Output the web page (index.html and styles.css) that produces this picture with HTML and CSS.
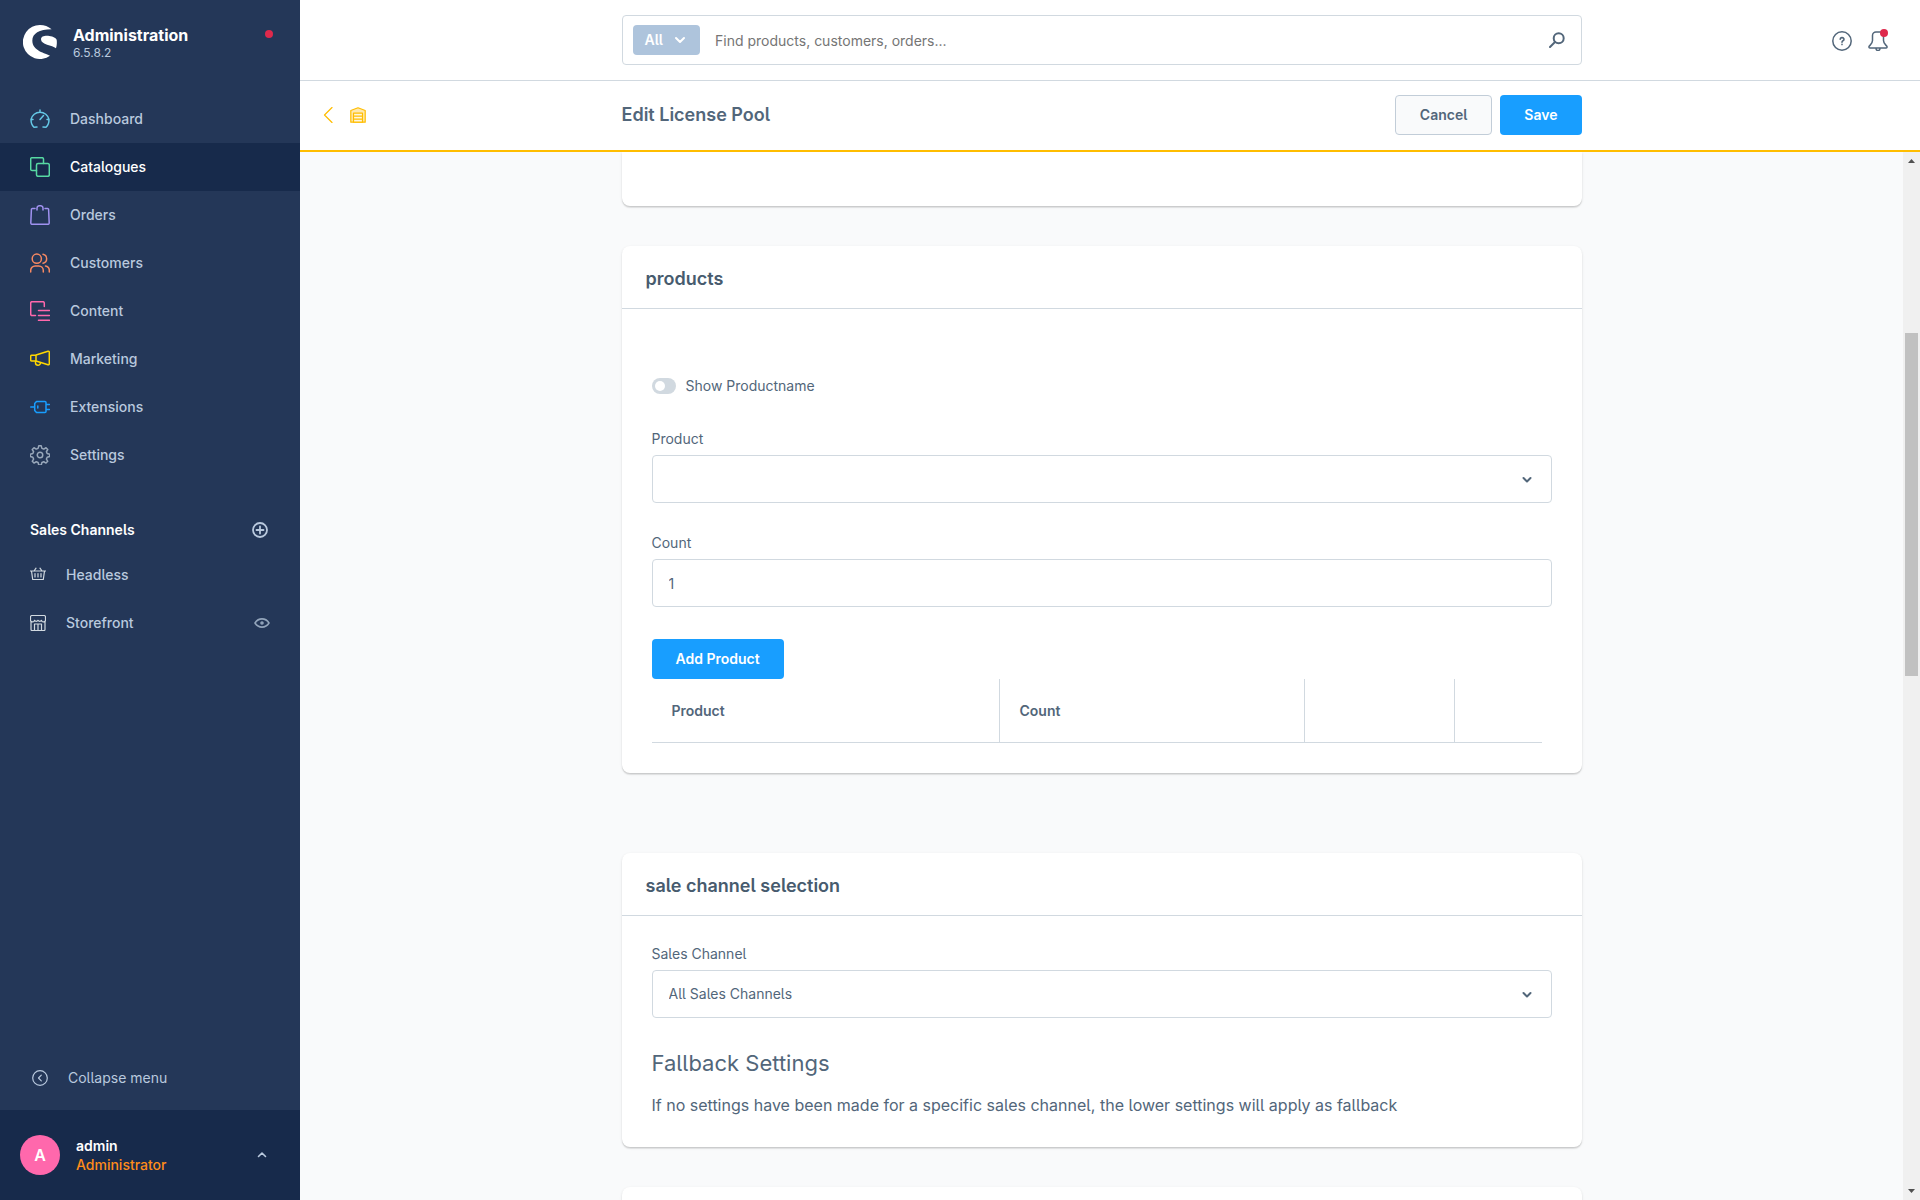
FILE: index.html
```html
<!DOCTYPE html>
<html lang="en">
<head>
<meta charset="utf-8">
<meta name="viewport" content="width=device-width, initial-scale=1">
<title>Edit License Pool | Administration</title>
<link rel="stylesheet" href="styles.css">
</head>
<body>
<div class="app">
  <aside class="sidebar">
    <header class="brand">
      <svg class="brand-logo" viewBox="0 0 102 102" aria-hidden="true"><path d="M86 13C76 4 64 0 51 0A51 51 0 1 0 81 92C68 84 28 78 28 47C28 26 48 13 86 13Z"/><path d="M54 43C54 34 66 31 79 33C91 35 99 39 101 44C102 52 102 60 99 70C88 60 54 60 54 43Z"/></svg>
      <div class="brand-text">
        <span class="brand-name">Administration</span>
        <span class="brand-version">6.5.8.2</span>
      </div>
      <span class="status-dot"></span>
    </header>
    <nav class="nav" aria-label="Main">
      <a class="nav-item" href="#"><svg class="icon-20 c-dashboard" viewBox="0 0 20 20"><path d="M7 18l-3 .2C2 16.500 1 13.500 1 10.500a9.200 9.200 0 0 1 18 0c0 3-1 6-3 7.700L13 18M1 10.500h2M17 10.500h2M10 1v2M10 10.500l3.500-4"/></svg>Dashboard</a>
      <a class="nav-item active" href="#" aria-current="page"><svg class="icon-20 c-catalogue" viewBox="0 0 20 20"><path d="M6.500 13.500H2a1.300 1.300 0 0 1-1.300-1.300V2A1.300 1.300 0 0 1 2 .7h10.200A1.300 1.300 0 0 1 13.500 2v4.500"/><rect x="6.500" y="6.500" width="12.800" height="12.800" rx="1.500"/></svg>Catalogues</a>
      <a class="nav-item" href="#"><svg class="icon-20 c-orders" viewBox="0 0 20 20"><path d="M5 3.500H2.500A1 1 0 0 0 1.400 4.500L.8 18a1.300 1.300 0 0 0 1.300 1.300h15.800a1.300 1.300 0 0 0 1.300-1.300L18.600 4.500a1 1 0 0 0-1.100-1H15M7 5V3.500A2.500 2.500 0 0 1 9 .8h2a2.500 2.500 0 0 1 2 2.700V5"/></svg>Orders</a>
      <a class="nav-item" href="#"><svg class="icon-20 c-customers" viewBox="0 0 20 20"><circle cx="6.800" cy="5.700" r="4.600"/><path d="M.7 19v-1.500A4.500 4.500 0 0 1 5.200 13h3.600a4.500 4.500 0 0 1 4.500 4.500V19M13 1.200a4.600 4.600 0 0 1 0 9M15.500 13c2.500.5 3.800 2.300 3.800 4.500V19"/></svg>Customers</a>
      <a class="nav-item" href="#"><svg class="icon-20 c-content" viewBox="0 0 20 20"><path d="M5.500 14.500H2A1.300 1.300 0 0 1 .7 13.200V2A1.300 1.300 0 0 1 2 .7h11A1.300 1.300 0 0 1 14.300 2v3.500M8.500 9.500h11M8.500 14.500h11M8.500 19.300h11"/></svg>Content</a>
      <a class="nav-item" href="#"><svg class="icon-20 c-marketing" viewBox="0 0 20 20"><path d="M6 6L18 2.200a1 1 0 0 1 1.300 1v11.600a1 1 0 0 1-1.300 1L6 12zM6 6.300H1.700a1 1 0 0 0-1 1V11a1 1 0 0 0 1 1H6M5.500 12v1.800a2.400 2.400 0 0 0 5 0"/></svg>Marketing</a>
      <a class="nav-item" href="#"><svg class="icon-20 c-extensions" viewBox="0 0 20 20"><path d="M.7 10h4M16 7.500h3.500M16 12.500h3.500M7.800 9v2M6.500 4.500H15a1 1 0 0 1 1 1v9a1 1 0 0 1-1 1H6.500l-1.800-2v-7z"/></svg>Extensions</a>
      <a class="nav-item" href="#"><svg class="icon-20 c-settings" viewBox="0 0 24 24"><circle cx="12" cy="12" r="3.300"/><path d="M10.500 1h3l.8 3 2.200.9 2.700-1.600 2.100 2.100-1.600 2.700.9 2.200 3 .8v2.800l-3 .8-.9 2.200 1.600 2.700-2.100 2.100-2.700-1.600-2.200.9-.8 3h-3l-.8-3-2.200-.9-2.700 1.600-2.100-2.100 1.600-2.700-.9-2.200-3-.8v-2.800l3-.8.9-2.200-1.600-2.700 2.100-2.100 2.700 1.600 2.200-.9z"/></svg>Settings</a>
    </nav>
    <div class="channels-head">
      <h2 class="channels-title">Sales Channels</h2>
      <button class="icon-button" type="button" aria-label="Add sales channel"><svg class="icon-16 bold" viewBox="0 0 16 16"><circle cx="8" cy="8" r="7"/><path d="M8 4.500v7M4.500 8h7"/></svg></button>
    </div>
    <nav aria-label="Sales channels">
      <a class="nav-item channel" href="#"><svg class="icon-16" viewBox="0 0 16 16"><path d="M.5 4h15M1.500 4l1.200 8.500h10.600L14.500 4M4 4l2-2.800M12 4l-2-2.800M5 6.500v3.500M8 6.500v3.500M11 6.500v3.500"/></svg>Headless</a>
      <a class="nav-item channel" href="#"><svg class="icon-16" viewBox="0 0 16 16"><path d="M1 6v8.500a1 1 0 0 0 1 1h12a1 1 0 0 0 1-1V6M.5 4.500V2A1.500 1.500 0 0 1 2 .5h12A1.500 1.500 0 0 1 15.500 2v2.500a2 2 0 0 1-4 .8 2 2 0 0 1-3.500 0 2 2 0 0 1-3.500 0 2 2 0 0 1-4-.8zM4.500 15.500V9h7v6.500M8 9v6.500"/></svg>Storefront<svg class="icon-16 eye" viewBox="0 0 16 16"><path d="M1 8c3.500-5.500 10.500-5.500 14 0-3.500 5.500-10.500 5.500-14 0z"/><circle cx="8" cy="8" r="1"/></svg></a>
    </nav>
    <button class="collapse" type="button"><svg class="icon-16" viewBox="0 0 16 16"><circle cx="8" cy="8" r="7.300"/><path d="M9.300 5.200L6.500 8l2.800 2.800"/></svg>Collapse menu</button>
    <button class="user" type="button">
      <span class="avatar">A</span>
      <span class="user-text"><span class="user-name">admin</span><span class="user-role">Administrator</span></span>
      <svg class="user-caret" viewBox="0 0 10 10"><path d="M1.500 6.500L5 3l3.500 3.500"/></svg>
    </button>
  </aside>

  <div class="workspace">
    <header class="topbar">
      <form class="search" role="search">
        <button class="search-scope" type="button">All<svg viewBox="0 0 10 8"><path d="M1 2l4 4 4-4"/></svg></button>
        <input class="search-input" type="search" aria-label="Search" placeholder="Find products, customers, orders...">
        <button class="icon-button search-go" type="submit" aria-label="Search"><svg class="icon-16" viewBox="0 0 16 16"><circle cx="9.700" cy="6.200" r="5"/><path d="M6 10L1 15"/></svg></button>
      </form>
      <div class="topbar-tools">
        <button class="icon-button" type="button" aria-label="Help"><svg class="icon-20" viewBox="0 0 20 20"><circle cx="10" cy="10" r="9.200"/><path class="question" d="M8.200 8.300a1.900 1.700 0 1 1 2.800 1.500c-.7.400-1 .8-1 1.500M10 13.200v.4"/></svg></button>
        <button class="icon-button bell" type="button" aria-label="Notifications"><svg class="icon-20" viewBox="0 0 20 20"><path d="M8 .9h4a3.500 3.500 0 0 1 3.500 3.500v5.100c0 2.500 1 3.200 3 5.300.8.900.8 2.200-.3 2.200H1.800c-1.100 0-1.100-1.300-.3-2.200 2-2.100 3-2.800 3-5.300V4.400A3.500 3.500 0 0 1 8 .9zM8 17.500a2 2 0 0 0 4 0"/></svg><span class="badge"></span></button>
      </div>
    </header>

    <div class="smartbar">
      <a class="smartbar-back" href="#" aria-label="Back to catalogues">
        <svg class="back-arrow" viewBox="0 0 10 16"><path d="M9 .5L1.500 8 9 15.500"/></svg>
        <svg class="icon-16" viewBox="0 0 16 16"><path class="shade" d="M.8 3.500L8 .8l7.200 2.700v11.700H.8z"/><path class="cutout" d="M3.500 6.200h9v9h-9z"/><path d="M3.500 9.200h9M3.500 12.200h9"/></svg>
      </a>
      <div class="smartbar-main">
        <h1 class="page-title">Edit License Pool</h1>
        <div class="actions">
          <button class="btn" type="button">Cancel</button>
          <button class="btn primary" type="submit" form="pool-form">Save</button>
        </div>
      </div>
    </div>

    <div class="viewport">
      <main class="content">
        <form class="cards" id="pool-form">
          <section class="card continued"></section>

          <section class="card products">
            <h2 class="card-title">products</h2>
            <div class="card-body">
              <label class="toggle"><input class="switch" type="checkbox" role="switch">Show Productname</label>
              <div class="field">
                <label for="product">Product</label>
                <div class="select"><select id="product"><option></option></select><svg viewBox="0 0 10 8"><path d="M1.500 2L5 5.500 8.500 2"/></svg></div>
              </div>
              <div class="field">
                <label for="count">Count</label>
                <input class="text-input" id="count" type="text" inputmode="numeric" value="1">
              </div>
              <button class="btn primary" type="button">Add Product</button>
              <table class="grid">
                <thead><tr><th class="col-product" scope="col">Product</th><th class="col-count" scope="col">Count</th><th class="col-extra"></th><th></th></tr></thead>
              </table>
            </div>
          </section>

          <section class="card">
            <h2 class="card-title">sale channel selection</h2>
            <div class="card-body">
              <div class="field">
                <label for="channel">Sales Channel</label>
                <div class="select"><select id="channel"><option>All Sales Channels</option></select><svg viewBox="0 0 10 8"><path d="M1.500 2L5 5.500 8.500 2"/></svg></div>
              </div>
              <h3 class="section-title">Fallback Settings</h3>
              <p class="hint">If no settings have been made for a specific sales channel, the lower settings will apply as fallback</p>
            </div>
          </section>

          <section class="card upcoming"></section>
        </form>
      </main>
      <div class="scrollbar" aria-hidden="true">
        <svg viewBox="0 0 7 4"><path d="M0 4L3.500 0 7 4z"/></svg>
        <div class="track"><div class="thumb"></div></div>
        <svg viewBox="0 0 7 4"><path d="M0 0L3.500 4 7 0z"/></svg>
      </div>
    </div>
  </div>
</div>
</body>
</html>
```

FILE: styles.css
```css
:root {
  --text: #52667a;
  --line: #d1d9e0;
  --primary: #189eff;
  --accent: #ffbd00;
  --scrollbar: 17px;
}

*, *::before, *::after { box-sizing: border-box; }

body {
  margin: 0;
  font: 400 14px/16px Inter, "Liberation Sans", sans-serif;
  font-feature-settings: "cv05" 1;
  color: var(--text);
  background: #f9fafb;
}

h1, h2, h3, p { margin: 0; }
button, input, select { font: inherit; font-feature-settings: inherit; color: inherit; }
button { border: 0; padding: 0; background: none; cursor: pointer; }
a { color: inherit; text-decoration: none; }
svg { flex: none; display: block; fill: none; stroke: currentColor; stroke-width: 1.5; stroke-linecap: round; stroke-linejoin: round; }

.app { display: flex; height: 100vh; overflow: hidden; }
.icon-20 { width: 20px; height: 20px; }
.icon-16 { width: 16px; height: 16px; stroke-width: 1.2; }
.icon-button { position: relative; display: grid; place-items: center; }

/* Sidebar */
.sidebar {
  flex: none;
  display: flex;
  flex-direction: column;
  width: 300px;
  color: #b9c9de;
  background: #243758;
}
.brand { display: flex; gap: 16px; height: 95px; padding: 25px 27px 0 23px; }
.brand-logo { width: 34px; height: 34px; fill: #fff; stroke: none; }
.brand-text { display: flex; flex-direction: column; flex: 1; }
.brand-name { font-size: 16px; line-height: 20px; font-weight: 700; color: #fff; }
.brand-version { font-size: 12px; }
.status-dot { width: 8px; height: 8px; margin-top: 5px; border-radius: 50%; background: #de294c; }

.nav-item {
  display: flex;
  align-items: center;
  gap: 20px;
  height: 48px;
  padding: 0 30px;
  font-weight: 500;
}
.nav-item.active { color: #fff; background: #172a4b; }
.channel .icon-16 { color: #d1d9e0; }
.c-dashboard { color: #65c8e6; }
.c-catalogue { color: #57d9a3; }
.c-orders { color: #a092f0; }
.c-customers { color: #f88962; }
.c-content { color: #ff68ac; }
.c-marketing { color: #ffd700; }
.c-extensions { color: var(--primary); }
.c-settings { color: #98a7ba; stroke-width: 1.8; }

.channels-head { display: flex; align-items: center; height: 42px; margin-top: 30px; padding: 0 32px 0 30px; }
.channels-title { flex: 1; font-size: 14px; font-weight: 600; color: #fff; }
.bold { stroke-width: 1.8; }
.channel .eye { margin-left: auto; stroke-width: 1.6; color: #93a5bb; }

.collapse { display: flex; align-items: center; gap: 20px; height: 48px; margin: auto 0 8px; padding: 0 32px; }
.user { display: flex; align-items: center; gap: 16px; height: 90px; padding: 0 33px 0 20px; background: #172a4b; text-align: left; }
.avatar { display: grid; place-items: center; width: 40px; height: 40px; border-radius: 50%; background: #ff68ac; color: #fff; font-size: 16px; font-weight: 600; }
.user-text { flex: 1; display: flex; flex-direction: column; line-height: 19px; font-weight: 500; }
.user-name { color: #fff; font-weight: 600; }
.user-role { color: #ff8c1a; }
.user-caret { width: 10px; height: 10px; stroke-width: 1.6; }

/* Top bar */
.workspace { flex: 1; min-width: 0; display: flex; flex-direction: column; }
.topbar, .smartbar {
  flex: none;
  display: grid;
  grid-template-columns: 1fr minmax(0, 960px) 1fr;
  align-items: center;
  padding-right: var(--scrollbar);
  background: #fff;
}
.topbar { height: 81px; border-bottom: 1px solid var(--line); }
.search { grid-column: 2; display: flex; align-items: center; height: 50px; padding: 0 16px 0 10px; border: 1px solid var(--line); border-radius: 4px; }
.search-scope { display: flex; align-items: center; gap: 12px; height: 30px; padding: 0 15px 0 12px; border-radius: 4px; background: #aec4dc; color: #fff; font-weight: 600; }
.search-scope svg { width: 10px; height: 8px; stroke-width: 2; }
.search-input { flex: 1; min-width: 0; padding: 2px 15px 0; border: 0; outline: 0; background: none; appearance: none; }
.search-input::placeholder { color: #757575; opacity: 1; }
.search-go .icon-16 { stroke-width: 2; }
.topbar-tools { display: flex; justify-content: flex-end; gap: 16px; padding: 2px 15px 0 0; }
.question { stroke-width: 1.6; }
.badge { position: absolute; top: -2px; right: 0; width: 8px; height: 8px; border-radius: 50%; background: #de294c; }

.smartbar { height: 71px; padding-bottom: 1px; border-bottom: 2px solid var(--accent); }
.smartbar-back { display: flex; align-items: center; gap: 17px; padding-left: 23px; color: var(--accent); }
.back-arrow { width: 10px; height: 16px; stroke-width: 1.2; }
.shade { fill: #ffe9b0; }
.cutout { fill: #fff6df; }
.smartbar-main { display: flex; align-items: center; justify-content: space-between; }
.page-title { font-size: 18px; line-height: 24px; font-weight: 600; }
.actions { display: flex; gap: 8px; }
.btn { height: 40px; padding: 0 24px; border: 1px solid #c2cdd8; border-radius: 4px; background: #f9fafb; font-weight: 600; }
.btn.primary { border: 0; background: var(--primary); color: #fff; }

/* Cards */
.viewport { flex: 1; min-height: 0; display: flex; }
.content { flex: 1; min-width: 0; overflow: hidden; }
.cards { display: flex; flex-direction: column; gap: 40px; max-width: 960px; margin: 0 auto; }
.card { border-radius: 8px; background: #fff; box-shadow: 0 1px 1px rgba(0, 0, 0, .08), 0 2px 1px rgba(0, 0, 0, .06), 0 1px 3px rgba(0, 0, 0, .1); }
.continued { height: 54px; border-radius: 0 0 8px 8px; }
.upcoming { height: 120px; }
.products { margin-bottom: 40px; }
.card-title { padding: 21px 24px 17px; border-bottom: 1px solid var(--line); font-size: 18px; line-height: 24px; font-weight: 600; color: #475b6e; }
.card-body { padding: 30px; }

.toggle { display: flex; align-items: center; gap: 10px; margin: 39px 0 37px; }
.switch { position: relative; flex: none; width: 24px; height: 16px; margin: 0; border-radius: 8px; background: var(--line); appearance: none; }
.switch::before { content: ""; position: absolute; top: 3px; left: 3px; width: 10px; height: 10px; border-radius: 50%; background: #fff; }

.field { display: flex; flex-direction: column; gap: 8px; margin-bottom: 32px; }
.select { position: relative; }
.select select, .text-input { width: 100%; height: 48px; padding: 0 16px; border: 1px solid var(--line); border-radius: 4px; background: #fff; appearance: none; }
.select svg { position: absolute; top: 21px; right: 20px; width: 10px; height: 8px; stroke-width: 2; pointer-events: none; }

.grid { width: calc(100% - 10px); border-collapse: separate; border-spacing: 0; table-layout: fixed; text-align: left; }
.grid th { height: 64px; padding: 0 20px; border-right: 1px solid var(--line); border-bottom: 1px solid var(--line); font-weight: 600; }
.grid th:last-child { border-right: 0; }
.col-product { width: 348px; }
.col-count { width: 305px; }
.col-extra { width: 150px; }

.section-title { margin-bottom: 17px; font-size: 22px; line-height: 26px; font-weight: 400; }
.hint { font-size: 16px; line-height: 24px; }

/* Scrollbar */
.scrollbar { flex: none; display: flex; flex-direction: column; align-items: center; gap: 6px; width: var(--scrollbar); padding: 7px 0; background: #f0f0f0; }
.scrollbar svg { width: 7px; height: 4px; fill: #505050; stroke: none; }
.track { flex: 1; display: grid; grid-template-rows: 33fr 69fr 102fr; }
.thumb { grid-row: 2; width: 13px; background: #c1c1c1; }
```
